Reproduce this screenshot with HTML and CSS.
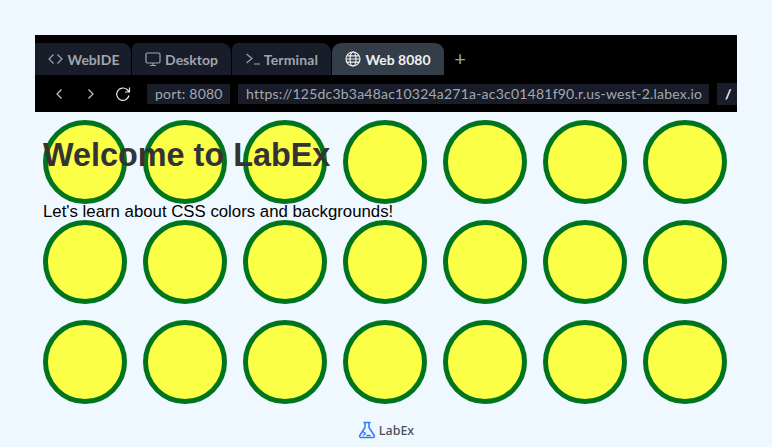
FILE: index.html
```html
<!DOCTYPE html>
<html lang="en">
<head>
  <meta charset="UTF-8">
  <title>LabEx Web 8080</title>
  <link rel="stylesheet" href="styles.css">
</head>
<body>
  <main class="frame">
    <div class="tabs">
      <div class="tab">
        <svg class="icon" width="17" height="16" viewBox="0 0 17 16"><path d="M6.500 3.500 2 8l4.500 4.500M10.500 3.500 15 8l-4.500 4.500"/></svg>
        WebIDE
      </div>
      <div class="tab">
        <svg class="icon" width="16" height="16" viewBox="0 0 16 16"><rect x="1" y="2" width="14" height="10" rx="1.500"/><path d="M8 12v2M5 14.500h6"/></svg>
        Desktop
      </div>
      <div class="tab tab-term">
        <svg class="icon" width="16" height="16" viewBox="0 0 16 16"><path d="M1.500 3 7 7.500 1.500 12M9 13h6"/></svg>
        Terminal
      </div>
      <div class="tab active">
        <svg class="icon" width="16" height="16" viewBox="0 0 16 16"><circle cx="8" cy="8" r="7"/><ellipse cx="8" cy="8" rx="3" ry="7"/><path d="M1 8h14M2 4.800h12M2 11.200h12"/></svg>
        Web 8080
      </div>
      <div class="add">+</div>
    </div>
    <div class="toolbar">
      <svg class="icon nav" width="12" height="14" viewBox="0 0 12 14"><path d="M8.500 2.500 4 7l4.500 4.500"/></svg>
      <svg class="icon nav" width="12" height="14" viewBox="0 0 12 14"><path d="M3.500 2.500 8 7l-4.500 4.500"/></svg>
      <svg class="icon reload" width="16" height="16" viewBox="0 0 16 16"><path d="M14 9.500A6.200 6.200 0 1 1 12 3.500L14.500 6M14.500 1.500V6H10"/></svg>
      <div class="field port">port: 8080</div>
      <div class="field url">https://125dc3b3a48ac10324a271a-ac3c01481f90.r.us-west-2.labex.io</div>
      <div class="field path">/</div>
    </div>
  </main>

  <section class="stage">
    <div class="circles">
      <div class="circle"></div><div class="circle"></div><div class="circle"></div><div class="circle"></div><div class="circle"></div><div class="circle"></div><div class="circle"></div>
      <div class="circle"></div><div class="circle"></div><div class="circle"></div><div class="circle"></div><div class="circle"></div><div class="circle"></div><div class="circle"></div>
      <div class="circle"></div><div class="circle"></div><div class="circle"></div><div class="circle"></div><div class="circle"></div><div class="circle"></div><div class="circle"></div>
    </div>
    <div class="intro">
      <h1>Welcome to LabEx</h1>
      <p>Let's learn about CSS colors and backgrounds!</p>
    </div>
  </section>

  <footer class="brand">
    <svg width="18" height="18" viewBox="0 0 18 18"><path class="flask" d="M6 1.500h6M7 1.500v5L1.800 14.500A1.300 1.300 0 0 0 3 16.500h12a1.300 1.300 0 0 0 1.200-2L11 6.500v-5"/><path class="flask" d="m5.500 11 2 1.500-2 1.500M9 14.500h3"/></svg>
    LabEx
  </footer>
</body>
</html>
```

FILE: styles.css
```css
html, body { margin: 0; padding: 0; }
body {
  width: 772px;
  height: 447px;
  overflow: hidden;
  background-color: #f0f8ff;
  padding-top: 35px;
  box-sizing: border-box;
  font-family: "Liberation Sans", Arial, sans-serif;
}

.frame {
  margin-left: 35px;
  width: 702px;
  background-color: #000;
  font-family: Lato, "Noto Sans", sans-serif;
  overflow: hidden;
}
.icon { fill: none; stroke: currentColor; stroke-width: 1.200; flex: none; }

.tabs { display: flex; padding-top: 8px; height: 32px; }
.tab {
  box-sizing: border-box;
  width: 97px;
  margin-right: 3px;
  display: flex;
  align-items: center;
  justify-content: center;
  gap: 4px;
  background-color: #181d29;
  color: #a0a5ad;
  font-size: 14px;
  font-weight: 700;
  border-top-right-radius: 9px;
}
.tab:first-child { width: 96px; margin-right: 1px; }
.tab:nth-child(2), .tab:nth-child(3) { width: 99px; margin-right: 1px; border-top-left-radius: 6px; }
.tab-term { gap: 3px; letter-spacing: 0.150px; }
.tab.active {
  width: 112px;
  margin-right: 0;
  background-color: #343e48;
  color: #eef0f3;
  border-top-left-radius: 9px;
}
.add { width: 32px; text-align: center; line-height: 30px; color: #9ba1a9; font-size: 20px; }

.toolbar {
  display: flex;
  align-items: center;
  height: 37px;
  padding-left: 18px;
  color: #c4c8cd;
}
.nav { margin-right: 20px; }
.reload { margin-left: -2px; margin-right: 16px; color: #e8eaec; }
.field {
  height: 20px;
  line-height: 20px;
  background-color: #181d29;
  color: #a4a9b1;
  font-size: 14px;
  letter-spacing: 0.220px;
  white-space: nowrap;
  padding: 0 8px;
  box-sizing: border-box;
}
.port { width: 83px; margin-right: 8px; }
.url { width: 471px; margin-right: 8px; }
.path { width: 20px; color: #f2f4f6; font-weight: 700; height: 22px; line-height: 22px; }

.stage { display: grid; padding: 8px 0 0 43px; }
.circles, .intro { grid-area: 1 / 1; }
.circles { display: grid; grid-template-columns: repeat(7, 84px); gap: 16px; }
.circle {
  box-sizing: border-box;
  width: 84px;
  height: 84px;
  border: 5px solid #00751e;
  border-radius: 50%;
  background-color: #fbff45;
}
.intro h1 {
  margin: 15px 0 0;
  color: #333;
  font-size: 32.400px;
  line-height: 40px;
  font-weight: 700;
}
.intro p {
  margin: 27px 0 0;
  color: #000;
  font-size: 16.800px;
  line-height: 20px;
}

.brand {
  display: flex;
  align-items: center;
  justify-content: center;
  gap: 3px;
  margin-top: 17px;
  color: #4a5058;
  font-family: "Noto Sans", sans-serif;
  font-size: 12.500px;
  font-weight: 500;
}
.flask { fill: none; stroke: #2e7cf6; stroke-width: 1.500; stroke-linejoin: round; stroke-linecap: round; }
```
